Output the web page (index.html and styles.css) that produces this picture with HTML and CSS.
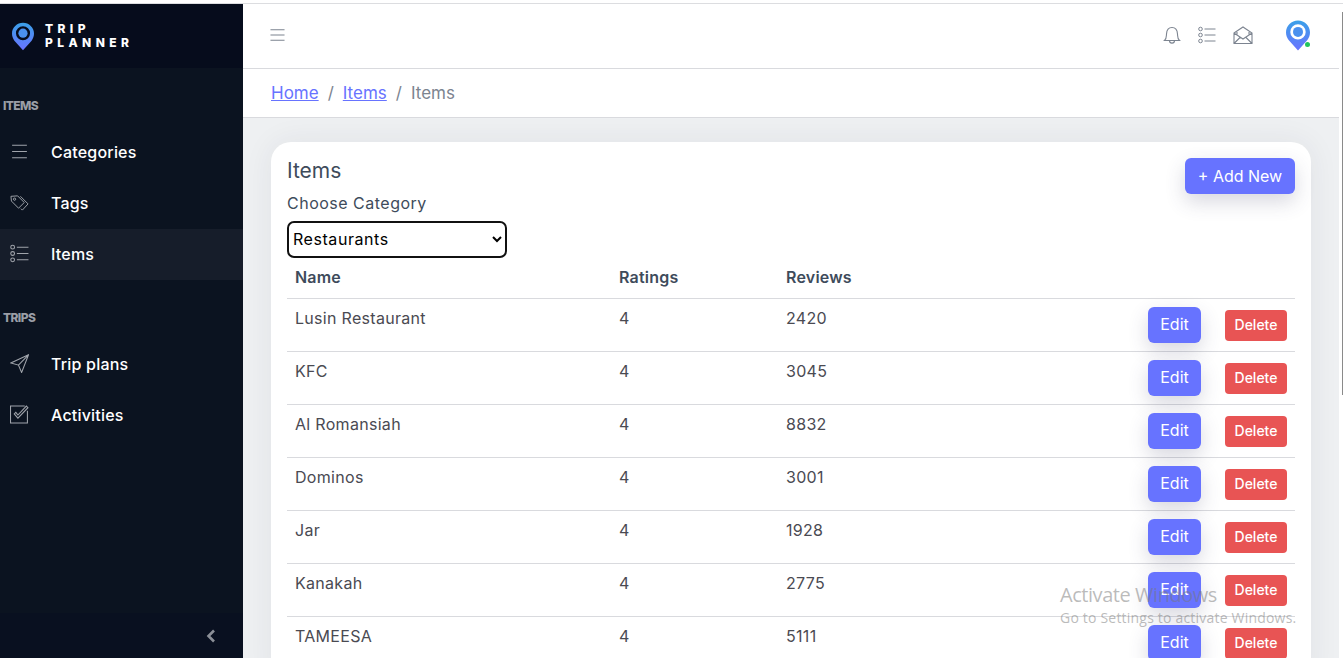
FILE: index.html
```html
<!DOCTYPE html>
<html lang="en">
<head>
    <meta charset="UTF-8">
    <meta name="viewport" content="width=device-width, initial-scale=1.0">
    <title>Trip Planner - Items</title>
    <link rel="stylesheet" href="styles.css">
</head>
<body>
    <svg class="defs" width="0" height="0">
        <defs>
            <linearGradient id="pin" x1="0" y1="0" x2="0" y2="1">
                <stop offset="0" stop-color="#3aa0e8"/>
                <stop offset="1" stop-color="#6a73ff"/>
            </linearGradient>
            <symbol id="pin-icon" viewBox="0 0 24 30">
                <path fill="url(#pin)" fill-rule="evenodd" d="M12 0C5.400 0 0 5.200 0 11.800c0 3 1 5.400 2.600 7.800L12 30l9.400-10.400C23 17.200 24 14.800 24 11.800 24 5.200 18.600 0 12 0zM12 3.700a7.700 7.700 0 1 1 0 15.400 7.700 7.700 0 0 1 0-15.400z"/>
                <circle cx="12" cy="11.400" r="5" fill="#4a90ee"/>
            </symbol>
            <symbol id="list-icon" viewBox="0 0 18 18">
                <g fill="none" stroke="currentColor" stroke-width="1">
                    <circle cx="2.500" cy="3" r="1.800"/>
                    <circle cx="2.500" cy="9" r="1.800"/>
                    <circle cx="2.500" cy="15" r="1.800"/>
                    <path d="M6.500 3H17.500M6.500 9H17.500M6.500 15H17.500"/>
                </g>
            </symbol>
        </defs>
    </svg>

    <div class="page">
        <aside class="sidebar">
            <div class="brand">
                <svg class="brand-pin"><use href="#pin-icon"/></svg>
                <div class="brand-name">TRIP<br>PLANNER</div>
            </div>
            <nav class="menu">
                <div class="menu-label">ITEMS</div>
                <a class="menu-item">
                    <svg class="menu-icon" viewBox="0 0 18 18"><path d="M2 3H16M2 9H16M2 15H16"/></svg>
                    Categories
                </a>
                <a class="menu-item">
                    <svg class="menu-icon" viewBox="0 0 20 18"><path d="M1 2.500 1.500 7.500 9 15 15 9 8 2 1 2.500zM11.500 15.500l1.500 1.500 6-6.500L11 2.500"/><circle cx="4.800" cy="5.500" r="1.200"/></svg>
                    Tags
                </a>
                <a class="menu-item active">
                    <svg class="menu-icon"><use href="#list-icon"/></svg>
                    Items
                </a>
                <div class="menu-label second">TRIPS</div>
                <a class="menu-item">
                    <svg class="menu-icon" viewBox="0 0 18 18"><path d="M17.500 .8 .8 8.500 8 10.500 11 17.500 17.500 .8zM8 10.500 17.500 .8"/></svg>
                    Trip plans
                </a>
                <a class="menu-item">
                    <svg class="menu-icon" viewBox="0 0 18 18"><path d="M16.500 5.500V17H.5V1H14"/><path d="M4 8.500 7.500 12.500 17 2.500 15.500 1 7.500 9.500 5.500 7z"/></svg>
                    Activities
                </a>
            </nav>
            <div class="sidebar-foot">
                <svg class="collapse" viewBox="0 0 10 14"><path d="M8 1.500 2.500 7 8 12.500"/></svg>
            </div>
        </aside>

        <div class="main">
            <header class="topbar">
                <svg class="top-icon menu-toggle" viewBox="0 0 16 14"><path d="M.5 1.500H15.500M.5 7H15.500M.5 12.500H15.500"/></svg>
                <div class="top-actions">
                    <svg class="top-icon" viewBox="0 0 18 18"><path d="M1.500 14.500C3.500 13 3.300 11 3.500 8 3.700 4.500 5.500 1.500 9 1.500s5.300 3 5.500 6.500c.2 3 0 5 2 6.500H1.500zM6.500 14.500c0 3.500 5 3.500 5 0"/></svg>
                    <svg class="top-icon list"><use href="#list-icon"/></svg>
                    <svg class="top-icon mail" viewBox="0 0 20 18"><path d="M1 7 10 1l9 6v10.500H1V7zM1 7l9 6 9-6M1 17.500l6.500-6.500M19 17.500 12.500 11M4 9V6M16 9V6"/></svg>
                    <div class="avatar">
                        <svg class="avatar-pin"><use href="#pin-icon"/></svg>
                        <span class="status"></span>
                    </div>
                </div>
            </header>

            <div class="breadcrumb">
                <a href="#">Home</a><span class="sep">/</span><a href="#">Items</a><span class="sep">/</span><span class="current">Items</span>
            </div>

            <section class="content">
                <div class="card">
                    <div class="card-head">
                        <div>
                            <h2 class="card-title">Items</h2>
                            <label class="field-label" for="category">Choose Category</label>
                            <select class="category" id="category">
                                <option>Restaurants</option>
                            </select>
                        </div>
                        <button class="btn add">+ Add New</button>
                    </div>
                    <table class="items">
                        <thead>
                            <tr><th class="col-name">Name</th><th class="col-rating">Ratings</th><th>Reviews</th><th class="col-actions"></th></tr>
                        </thead>
                        <tbody>
                            <tr><td>Lusin Restaurant</td><td>4</td><td>2420</td><td class="actions"><button class="btn edit">Edit</button><button class="btn delete">Delete</button></td></tr>
                            <tr><td>KFC</td><td>4</td><td>3045</td><td class="actions"><button class="btn edit">Edit</button><button class="btn delete">Delete</button></td></tr>
                            <tr><td>Al Romansiah</td><td>4</td><td>8832</td><td class="actions"><button class="btn edit">Edit</button><button class="btn delete">Delete</button></td></tr>
                            <tr><td>Dominos</td><td>4</td><td>3001</td><td class="actions"><button class="btn edit">Edit</button><button class="btn delete">Delete</button></td></tr>
                            <tr><td>Jar</td><td>4</td><td>1928</td><td class="actions"><button class="btn edit">Edit</button><button class="btn delete">Delete</button></td></tr>
                            <tr><td>Kanakah</td><td>4</td><td>2775</td><td class="actions"><button class="btn edit">Edit</button><button class="btn delete">Delete</button></td></tr>
                            <tr><td>TAMEESA</td><td>4</td><td>5111</td><td class="actions"><button class="btn edit">Edit</button><button class="btn delete">Delete</button></td></tr>
                        </tbody>
                    </table>
                </div>
            </section>
        </div>
    </div>

    <div class="scroll-thumb"></div>

    <div class="watermark">
        <div class="wm-title">Activate Windows</div>
        <div class="wm-text">Go to Settings to activate Windows.</div>
    </div>
</body>
</html>
```

FILE: styles.css
```css
* {
    box-sizing: border-box;
}

html, body {
    height: 100%;
}

body {
    margin: 0;
    padding-top: 3px;
    overflow: hidden;
    font-family: Inter, "Open Sans", sans-serif;
    font-size: 15px;
    color: #3e4b5b;
    background-color: #fff;
}

.defs {
    position: absolute;
}

.page {
    height: 100%;
    display: flex;
    border-top: 1px solid #dcdde0;
}

.sidebar {
    width: 243px;
    flex-shrink: 0;
    display: flex;
    flex-direction: column;
    background-color: #0b1320;
    color: #fff;
}

.brand {
    height: 64px;
    display: flex;
    align-items: center;
    gap: 11px;
    padding-left: 12px;
    background-color: #060c1c;
}

.brand-pin {
    width: 22px;
    height: 29px;
}

.brand-name {
    font-size: 12px;
    font-weight: 800;
    line-height: 14px;
    letter-spacing: 4.4px;
}

.menu {
    flex: 1;
    padding-top: 28px;
}

.menu-label {
    height: 20px;
    padding-left: 3px;
    font-size: 12px;
    font-weight: 800;
    line-height: 20px;
    letter-spacing: -.6px;
    color: #9a9ea6;
}

.menu-label.second {
    margin-top: 28px;
}

.menu-item {
    height: 51px;
    display: flex;
    align-items: center;
    gap: 22px;
    padding-left: 10px;
    padding-bottom: 2px;
    font-size: 16px;
    font-weight: 500;
    letter-spacing: .2px;
}

.menu-label + .menu-item {
    margin-top: 11px;
}

.menu-item.active {
    background-color: #161d2a;
}

.menu-icon {
    width: 19px;
    height: 19px;
    fill: none;
    stroke: #a0a4ab;
    stroke-width: 1;
    color: #a0a4ab;
}

.sidebar-foot {
    height: 45px;
    display: flex;
    align-items: center;
    justify-content: flex-end;
    padding: 1px 27px 0 0;
    background-color: #091020;
}

.collapse {
    width: 10px;
    height: 14px;
    fill: none;
    stroke: #8b8f97;
    stroke-width: 2.600;
}

.main {
    flex: 1;
    min-width: 0;
    display: flex;
    flex-direction: column;
    margin-right: 4px;
}

.topbar {
    height: 65px;
    flex-shrink: 0;
    display: flex;
    align-items: center;
    justify-content: space-between;
    padding: 0 29px 2px 27px;
    background-color: #fff;
    border-bottom: 1px solid #d9dade;
}

.top-icon {
    width: 18px;
    height: 18px;
    fill: none;
    stroke: #7c8490;
    stroke-width: 1.100;
    color: #7c8490;
}

.menu-toggle {
    width: 15px;
    height: 14px;
}

.top-actions {
    display: flex;
    align-items: center;
    gap: 17px;
}

.top-icon.mail {
    width: 20px;
}

.avatar {
    position: relative;
    width: 24px;
    height: 33px;
    margin-left: 16px;
}

.avatar-pin {
    display: block;
    width: 24px;
    height: 33px;
}

.status {
    position: absolute;
    right: 0;
    bottom: 5px;
    width: 5px;
    height: 5px;
    border-radius: 50%;
    background-color: #22c55e;
}

.breadcrumb {
    height: 49px;
    flex-shrink: 0;
    display: flex;
    align-items: center;
    padding: 0 0 0 28px;
    font-size: 17px;
    background-color: #fff;
    border-bottom: 1px solid #d9dade;
}

.breadcrumb a {
    color: #6773ff;
}

.sep {
    margin: 0 9px;
    color: #7c8490;
}

.current {
    color: #7c8490;
}

.content {
    flex: 1;
    min-height: 0;
    padding: 24px 28px 0;
    background-color: #eef0f2;
}

.card {
    padding: 16px;
    border-radius: 20px;
    background-color: #fff;
    box-shadow: 0 0 30px rgba(40, 40, 70, .07);
}

.card-head {
    display: flex;
    justify-content: space-between;
    align-items: flex-start;
}

.card-title {
    margin: 0;
    font-size: 21px;
    font-weight: 400;
    line-height: 26px;
}

.field-label {
    display: block;
    margin-top: 8px;
    line-height: 22px;
    font-size: 16px;
    letter-spacing: .5px;
}

.category {
    display: block;
    width: 220px;
    height: 37px;
    margin-top: 7px;
    padding: 0 0 2px;
    font-family: inherit;
    font-size: 16px;
    letter-spacing: .55px;
    color: #000;
    background-color: #fff;
    border: 2px solid #111;
    border-radius: 7px;
}

.btn {
    font-family: inherit;
    color: #fff;
    border: none;
    cursor: pointer;
}

.add {
    width: 110px;
    height: 36px;
    font-size: 16px;
    border-radius: 6px;
    background-color: #6773ff;
    box-shadow: 0 8px 20px rgba(60, 60, 100, .2);
}

.items {
    width: 100%;
    border-collapse: collapse;
    margin-top: 4px;
}

.items th {
    height: 36px;
    padding: 0 8px 5px;
    font-size: 16px;
    font-weight: 600;
    letter-spacing: .2px;
    text-align: left;
    color: #3e4b5b;
    border-bottom: 1px solid #d9dade;
}

.col-name {
    width: 324px;
}

.col-rating {
    width: 167px;
}

.col-actions {
    width: 300px;
}

.items td {
    height: 53px;
    padding: 7px 8px;
    vertical-align: top;
    font-size: 16px;
    line-height: 24px;
    letter-spacing: .3px;
    color: #4a4a52;
    border-bottom: 1px solid #d9dade;
}

.items td.actions {
    text-align: right;
    vertical-align: middle;
    white-space: nowrap;
    padding: 0 8px;
}

.edit {
    width: 53px;
    height: 36px;
    padding: 0 0 2px;
    font-size: 16px;
    border-radius: 6px;
    background-color: #6773ff;
    box-shadow: 0 8px 20px rgba(60, 60, 100, .2);
    vertical-align: middle;
}

.delete {
    width: 62px;
    height: 31px;
    margin: 2px 0 0 24px;
    padding: 0 0 2px;
    font-size: 14px;
    font-weight: 500;
    border-radius: 4px;
    background-color: #e85454;
    vertical-align: middle;
}

.scroll-thumb {
    position: absolute;
    top: 12px;
    right: 0;
    width: 1px;
    height: 383px;
    background-color: #8a8a8a;
}

.watermark {
    position: absolute;
    left: 1060px;
    top: 582px;
    font-family: "Open Sans", sans-serif;
    color: rgba(120, 120, 120, .5);
    pointer-events: none;
}

.wm-title {
    font-size: 20px;
    line-height: 26px;
    letter-spacing: -.45px;
}

.wm-text {
    font-size: 14px;
    line-height: 20px;
    letter-spacing: .2px;
}
```
